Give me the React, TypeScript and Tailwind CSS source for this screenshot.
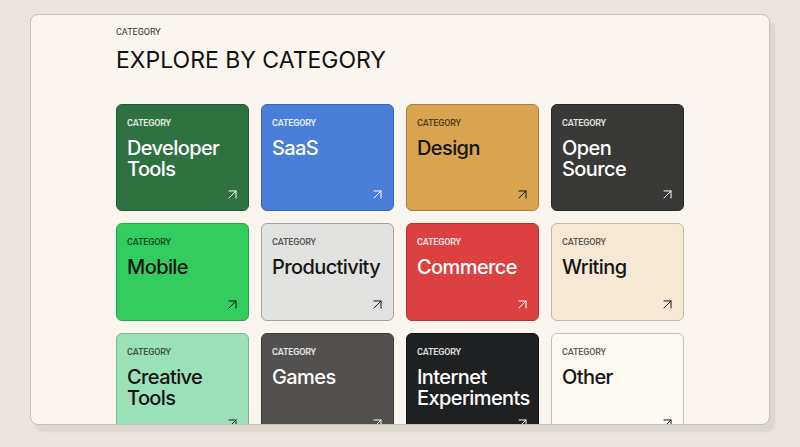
import React from "react";
import { ArrowUpRight } from "lucide-react";

type Category = {
  name: string[];
  bg: string;
  dark: boolean;
};

const categories: Category[] = [
  { name: ["Developer", "Tools"], bg: "bg-[#2f7241] border-[#24582f]", dark: true },
  { name: ["SaaS"], bg: "bg-[#4a7fd9] border-[#3a67b3]", dark: true },
  { name: ["Design"], bg: "bg-[#d9a450] border-[#a9803e]", dark: false },
  { name: ["Open", "Source"], bg: "bg-[#393937] border-[#262624]", dark: true },
  { name: ["Mobile"], bg: "bg-[#33cd5f] border-[#27a34a]", dark: false },
  { name: ["Productivity"], bg: "bg-[#e2e2e0] border-[#a3a3a1]", dark: false },
  { name: ["Commerce"], bg: "bg-[#dc4141] border-[#b13232]", dark: true },
  { name: ["Writing"], bg: "bg-[#f5e9d6] border-[#c8b9a2]", dark: false },
  { name: ["Creative", "Tools"], bg: "bg-[#9ae1b9] border-[#78b894]", dark: false },
  { name: ["Games"], bg: "bg-[#52514f] border-[#3a3938]", dark: true },
  { name: ["Internet", "Experiments"], bg: "bg-[#1e2022] border-[#111213]", dark: true },
  { name: ["Other"], bg: "bg-[#fcf8f2] border-[#c9c1b6]", dark: false },
];

function CategoryCard({ cat }: { cat: Category }) {
  return (
    <a
      href="#"
      className={`flex min-h-[98px] flex-col rounded-md border px-[10px] pt-[12px] pb-[9px] ${cat.bg} ${
        cat.dark ? "text-white" : "text-[#151515]"
      }`}
    >
      <span
        className={`font-['Roboto',sans-serif] text-[9px] leading-3 font-semibold tracking-[-0.02em] ${
          cat.dark ? "text-white/85" : "text-black/65"
        }`}
      >
        CATEGORY
      </span>
      <p className="mt-[9px] font-['Inter',sans-serif] text-[20px] leading-[21px] font-[450] tracking-[-0.03em]">
        {cat.name.map((line, i) => (
          <React.Fragment key={line}>
            {i > 0 && <br />}
            {line}
          </React.Fragment>
        ))}
      </p>
      <div className="mt-auto pt-[8px]">
        <div className="flex h-[13px] items-center justify-end">
          <ArrowUpRight size={17} strokeWidth={1.4} className="-mr-[3px] shrink-0" />
        </div>
      </div>
    </a>
  );
}

export default function App() {
  return (
    <div className="h-[447px] bg-[#e9e4de] px-[30px] pt-[14px]">
      <section className="h-[411px] overflow-hidden rounded-lg border border-[#c5bfb7] bg-[#faf5ee] shadow-[5px_7px_2px_rgba(90,70,40,0.08)]">
        <div className="mx-auto w-[568px] pt-[11px]">
          <p className="font-['Roboto',sans-serif] text-[9px] leading-3 text-[#333]">CATEGORY</p>
          <h2 className="mt-[8px] font-['Inter',sans-serif] text-[23px] leading-[28px] text-[#111]">
            EXPLORE BY CATEGORY
          </h2>
          <div className="mt-[30px] grid grid-cols-4 gap-3">
            {categories.map((c) => (
              <CategoryCard key={c.name.join(" ")} cat={c} />
            ))}
          </div>
        </div>
      </section>
    </div>
  );
}
